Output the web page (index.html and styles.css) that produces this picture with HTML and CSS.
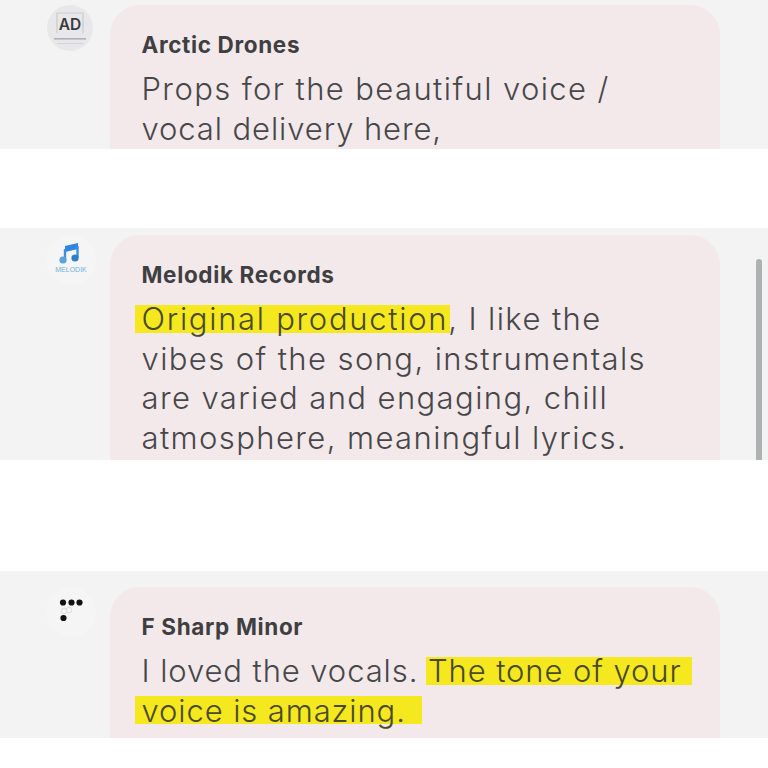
FILE: index.html
```
<!DOCTYPE html>
<html lang="en">
<head>
<meta charset="utf-8">
<title>Reviews</title>
<link rel="stylesheet" href="styles.css">
</head>
<body>
<section class="panel panel-a">
  <div class="avatar avatar-grey">
    <svg viewBox="0 0 46 46" width="46" height="46" aria-hidden="true">
      <path d="M10 28 V8 H36 V28" fill="none" stroke="#cbcbcf" stroke-width="1.2"/>
      <rect x="7" y="33" width="32" height="1.6" fill="#b0b0b5"/>
      <rect x="10" y="38" width="26" height="1" fill="#d4d4d8"/>
    </svg>
    <span class="ad">AD</span>
  </div>
  <article class="card">
    <h2 class="name">Arctic Drones</h2>
    <p class="text">Props for the beautiful voice /<br><span class="tight">vocal delivery here,</span></p>
  </article>
</section>
<section class="panel panel-b">
  <div class="avatar avatar-light">
    <svg viewBox="0 0 50 50" width="50" height="50" aria-hidden="true">
      <path d="M19 11 L32 8 V14 L19 17 Z" fill="#2e86e0"/>
      <path d="M19 14 V25 M31.500 11 V23" fill="none" stroke="#3f8fdc" stroke-width="2.4"/>
      <circle cx="17" cy="25" r="3.6" fill="#5aa2d8"/>
      <circle cx="29" cy="23" r="3.6" fill="#2f7fc8"/>
    </svg>
    <span class="mel">MELODIK</span>
  </div>
  <article class="card">
    <h2 class="name">Melodik Records</h2>
    <p class="text"><mark class="hl hl-wide">Original production</mark>, I like the<br>vibes of the song, instrumentals<br>are varied and engaging, chill<br>atmosphere, meaningful lyrics.</p>
  </article>
</section>
<section class="panel panel-c">
  <div class="avatar avatar-light">
    <svg viewBox="0 0 50 50" width="50" height="50" aria-hidden="true">
      <circle cx="17" cy="15.500" r="3.1" fill="#111"/>
      <circle cx="25.500" cy="15.500" r="3.1" fill="#111"/>
      <circle cx="33.500" cy="15.500" r="3.1" fill="#111"/>
      <circle cx="23" cy="23" r="2.8" fill="none" stroke="#ddd" stroke-width="1"/>
      <circle cx="18" cy="24" r="2.8" fill="none" stroke="#ddd" stroke-width="1"/>
      <circle cx="17.500" cy="31" r="3.1" fill="#111"/>
    </svg>
  </div>
  <article class="card">
    <h2 class="name">F Sharp Minor</h2>
    <p class="text tight">I loved the vocals. <mark class="hl hl-tone">The tone of your</mark><br><mark class="hl">voice is amazing.&nbsp;</mark></p>
  </article>
</section>
</body>
</html>
```
FILE: styles.css
```
html, body {
  margin: 0;
  padding: 0;
  background: #fff;
}
body {
  width: 768px;
  height: 768px;
  overflow: hidden;
  font-family: "Inter", "Liberation Sans", sans-serif;
  color: #454548;
}
.panel {
  background: #f3f3f4;
  overflow: hidden;
  display: flex;
  align-items: flex-start;
  padding-left: 46px;
  box-sizing: border-box;
  position: relative;
}
.panel-a { height: 149px; padding-top: 5px; }
.panel-b { height: 232px; margin-top: 79px; padding-top: 7px; }
.panel-c { height: 167px; margin-top: 111px; padding-top: 16px; }
.panel-b::after {
  content: "";
  position: absolute;
  left: 756px;
  top: 31px;
  bottom: 0;
  width: 6px;
  border-radius: 3px 3px 0 0;
  background: #aeb2b2;
}
.avatar {
  width: 50px;
  height: 50px;
  border-radius: 50%;
  flex: none;
  position: relative;
  margin-right: 14px;
}
.avatar svg { display: block; }
.avatar-grey {
  width: 46px;
  height: 46px;
  background: #e8e8ea;
  margin-left: 1px;
  margin-right: 17px;
}
.avatar-light { background: #f5f5f6; }
.ad {
  position: absolute;
  left: 0;
  right: 0;
  top: 10px;
  text-align: center;
  font: 600 15.5px/20px "Inter", "Liberation Sans", sans-serif;
  color: #3a3a3c;
}
.mel {
  position: absolute;
  left: 0;
  right: 0;
  top: 30px;
  text-align: center;
  font: 400 7px/9px "Liberation Sans", sans-serif;
  color: #6fb3d8;
}
.card {
  width: 610px;
  height: 400px;
  background: #f3e9ea;
  border-radius: 30px 30px 0 0;
  padding: 25px 0 0 31.5px;
  box-sizing: border-box;
  flex: none;
}
.name {
  margin: 0;
  font-family: "Inter", "Liberation Sans", sans-serif;
  font-weight: 700;
  font-size: 22.5px;
  line-height: 30px;
  letter-spacing: 0.65px;
  color: #3f3f42;
}
.text {
  margin: 9px 0 0;
  font-family: "Inter", "Liberation Sans", sans-serif;
  font-weight: 300;
  font-size: 31px;
  line-height: 39.5px;
  letter-spacing: 1.4px;
  color: #47474a;
}
.tight { letter-spacing: 0.9px; }
.hl {
  background: linear-gradient(#f5e81e, #f5e81e) 0 50% / 100% 28px no-repeat;
  color: #4a4a28;
  padding: 0 7px;
  margin: 0 -7px;
}
.hl-wide {
  letter-spacing: 1.7px;
  padding-right: 2px;
  margin-right: -2px;
}
.hl-tone {
  padding: 0 11px 0 2px;
  margin: 0 -11px 0 -2px;
}
```
